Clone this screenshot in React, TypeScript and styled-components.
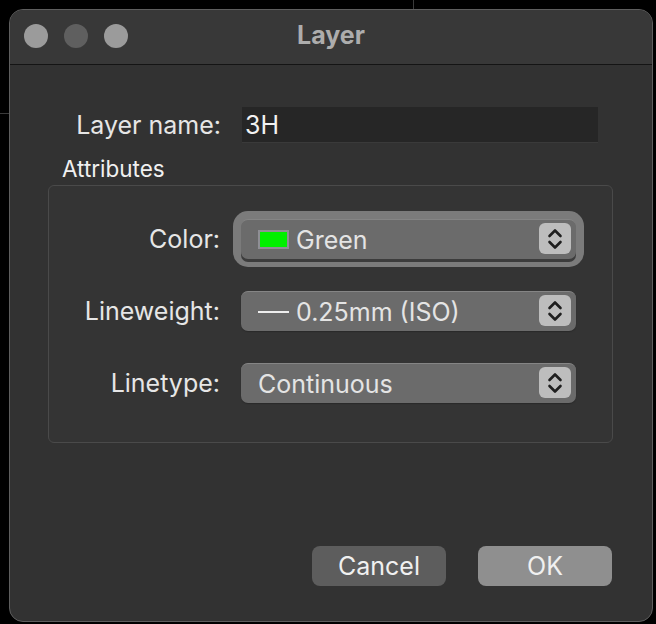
import * as React from "react";
import styled, { createGlobalStyle } from "styled-components";

const GlobalStyle = createGlobalStyle`
  html, body {
    margin: 0;
    padding: 0;
    background: #000;
  }
  body {
    font-family: Inter, "Liberation Sans", Arial, sans-serif;
    background-image:
      linear-gradient(#3a3a3a, #3a3a3a),
      linear-gradient(#3a3a3a, #3a3a3a);
    background-size: 1px 9px, 9px 1px;
    background-position: 413px 0, 0 113px;
    background-repeat: no-repeat;
  }
`;

const Page = styled.div`
  width: 656px;
  height: 624px;
  padding: 9px 0 0 9px;
  box-sizing: border-box;
`;

const Window = styled.div`
  width: 644px;
  height: 613px;
  box-sizing: border-box;
  background: #323232;
  border: 1px solid #5e5e5e;
  border-radius: 14px;
  overflow: hidden;
  display: flex;
  flex-direction: column;
`;

const TitleBar = styled.div`
  height: 54px;
  flex: none;
  background: #383838;
  border-bottom: 1px solid #141414;
  display: grid;
  grid-template-columns: 1fr auto 1fr;
  align-items: center;
`;

const Lights = styled.div`
  display: flex;
  gap: 16px;
  padding-left: 14px;
  margin-top: -2px;
`;

const Light = styled.span<{ $dim?: boolean }>`
  width: 24px;
  height: 24px;
  border-radius: 50%;
  background: ${(p) => (p.$dim ? "#5f5f5f" : "#9b9b9b")};
`;

const Title = styled.div`
  font-size: 25px;
  line-height: 30px;
  font-weight: 700;
  color: #adadad;
  margin-top: -4px;
`;

const Content = styled.div`
  flex: 1;
  display: flex;
  flex-direction: column;
  padding-top: 42px;
`;

const Row = styled.div`
  display: flex;
  align-items: center;
`;

const Label = styled.div<{ $width: number }>`
  width: ${(p) => p.$width}px;
  text-align: right;
  font-size: 25px;
  line-height: 30px;
  color: #e6e6e6;
  padding-right: 21px;
  box-sizing: content-box;
`;

const NameInput = styled.div`
  width: 356px;
  height: 36px;
  box-sizing: border-box;
  background: #262626;
  border-bottom: 1px solid #3a3a3a;
  padding-left: 3px;
  display: flex;
  align-items: center;
  font-size: 25px;
  color: #f2f2f2;
`;

const Heading = styled.div`
  margin: 13px 0 3px 52px;
  font-size: 22.5px;
  line-height: 26px;
  color: #f0f0f0;
`;

const Group = styled.div`
  margin-left: 38px;
  width: 565px;
  height: 258px;
  box-sizing: border-box;
  border: 1px solid #4a4a4a;
  border-radius: 6px;
  background: #343434;
  padding-top: 33px;
  display: flex;
  flex-direction: column;
  gap: 32px;
`;

const Popup = styled.div<{ $focused?: boolean }>`
  position: relative;
  width: 335px;
  height: 40px;
  box-sizing: border-box;
  border-radius: 7px;
  background: #6b6b6b;
  border-top: 1px solid #858585;
  box-shadow: ${(p) =>
    p.$focused
      ? "0 3px 0 #3c3c3c, 0 0 0 8px #7b7b7b"
      : "0 1px 1px #2a2a2a"};
  display: flex;
  align-items: center;
  padding-left: 17px;
  font-size: 25px;
  color: #e4e4e4;
  gap: 7px;
`;

const Swatch = styled.span`
  width: 31px;
  height: 19px;
  box-sizing: border-box;
  background: #00f000;
  border: 2px solid #8f8f95;
`;

const Dash = styled.span`
  width: 31px;
  height: 2px;
  background: #eeeeee;
`;

const Stepper = styled.div`
  position: absolute;
  right: 5px;
  top: 3px;
  width: 32px;
  height: 31px;
  border-radius: 6px;
  background: #bdbdbd;
  display: flex;
  align-items: center;
  justify-content: center;
`;

const Footer = styled.div`
  margin-top: auto;
  display: flex;
  justify-content: flex-end;
  gap: 32px;
  padding: 0 40px 35px 0;
`;

const Button = styled.div<{ $primary?: boolean }>`
  width: 134px;
  height: 40px;
  border-radius: 8px;
  background: ${(p) => (p.$primary ? "#8f8f8f" : "#5d5d5d")};
  display: flex;
  align-items: center;
  justify-content: center;
  font-size: 25px;
  color: #f0f0f0;
`;

const Chevrons = () => (
  <svg width="20" height="26" viewBox="0 0 20 26">
    <path
      d="M4.5 10 L10 4.5 L15.5 10 M4.5 16 L10 21.5 L15.5 16"
      fill="none"
      stroke="#1e1e1e"
      strokeWidth="2.6"
      strokeLinecap="round"
      strokeLinejoin="round"
    />
  </svg>
);

const Select = ({ children, focused }: { children: React.ReactNode; focused?: boolean }) => (
  <Popup $focused={focused}>
    {children}
    <Stepper>
      <Chevrons />
    </Stepper>
  </Popup>
);

export default function App() {
  return (
    <Page>
      <GlobalStyle />
      <Window>
        <TitleBar>
          <Lights>
            <Light />
            <Light $dim />
            <Light />
          </Lights>
          <Title>Layer</Title>
          <div />
        </TitleBar>
        <Content>
          <Row>
            <Label $width={211}>Layer name:</Label>
            <NameInput>3H</NameInput>
          </Row>
          <Heading>Attributes</Heading>
          <Group>
            <Row>
              <Label $width={171}>Color:</Label>
              <Select focused>
                <Swatch />
                Green
              </Select>
            </Row>
            <Row>
              <Label $width={171}>Lineweight:</Label>
              <Select>
                <Dash />
                0.25mm (ISO)
              </Select>
            </Row>
            <Row>
              <Label $width={171}>Linetype:</Label>
              <Select>Continuous</Select>
            </Row>
          </Group>
          <Footer>
            <Button>Cancel</Button>
            <Button $primary>OK</Button>
          </Footer>
        </Content>
      </Window>
    </Page>
  );
}
